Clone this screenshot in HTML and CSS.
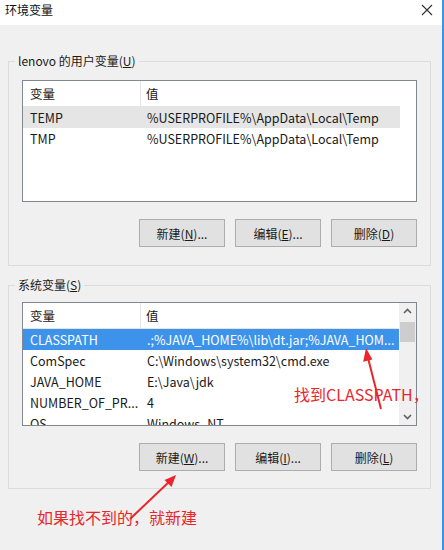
FILE: index.html
```html
<!DOCTYPE html>
<html lang="zh-CN">
<head>
<meta charset="utf-8">
<title>环境变量</title>
<link rel="stylesheet" href="styles.css">
</head>
<body>
<div class="window">
  <div class="titlebar">
    <span class="title">环境变量</span>
    <svg class="close" width="12" height="12" viewBox="0 0 12 12"><path d="M1 1L11 11M11 1L1 11" stroke="#333" stroke-width="1.1" fill="none"/></svg>
  </div>
  <div class="content">
    <fieldset class="group group-user">
      <legend class="legend">lenovo 的用户变量(<u>U</u>)</legend>
      <div class="group-inner">
        <div class="list">
          <div class="list-main">
            <div class="list-head">
              <div class="cell c1">变量</div>
              <div class="cell c2">值</div>
            </div>
            <div class="row hover"><div class="cell c1">TEMP</div><div class="cell c2">%USERPROFILE%\AppData\Local\Temp</div></div>
            <div class="row"><div class="cell c1">TMP</div><div class="cell c2">%USERPROFILE%\AppData\Local\Temp</div></div>
          </div>
          <div class="list-side"></div>
        </div>
        <div class="buttons">
          <div class="btn">新建(<u>N</u>)...</div>
          <div class="btn">编辑(<u>E</u>)...</div>
          <div class="btn">删除(<u>D</u>)</div>
        </div>
      </div>
    </fieldset>
    <fieldset class="group group-sys">
      <legend class="legend">系统变量(<u>S</u>)</legend>
      <div class="group-inner">
        <div class="list tall">
          <div class="list-main">
            <div class="list-head">
              <div class="cell c1">变量</div>
              <div class="cell c2">值</div>
            </div>
            <div class="row selected"><div class="cell c1">CLASSPATH</div><div class="cell c2">.;%JAVA_HOME%\lib\dt.jar;%JAVA_HOM...</div></div>
            <div class="row"><div class="cell c1">ComSpec</div><div class="cell c2">C:\Windows\system32\cmd.exe</div></div>
            <div class="row"><div class="cell c1">JAVA_HOME</div><div class="cell c2">E:\Java\jdk</div></div>
            <div class="row"><div class="cell c1">NUMBER_OF_PR...</div><div class="cell c2">4</div></div>
            <div class="row"><div class="cell c1">OS</div><div class="cell c2">Windows_NT</div></div>
          </div>
          <div class="scrollbar">
            <svg class="arrow-btn" width="17" height="17" viewBox="0 0 17 17"><path d="M5 10L8.5 6.5L12 10" stroke="#606060" stroke-width="1.6" fill="none"/></svg>
            <div class="track"><div class="thumb"></div></div>
            <svg class="arrow-btn" width="17" height="17" viewBox="0 0 17 17"><path d="M5 7L8.5 10.5L12 7" stroke="#606060" stroke-width="1.6" fill="none"/></svg>
          </div>
        </div>
        <div class="buttons">
          <div class="btn">新建(<u>W</u>)...</div>
          <div class="btn">编辑(<u>I</u>)...</div>
          <div class="btn">删除(<u>L</u>)</div>
        </div>
      </div>
    </fieldset>
  </div>

  <div class="note note-1">找到CLASSPATH，</div>
  <div class="note note-2">如果找不到的，就新建</div>
  <svg class="arrows" width="444" height="550" viewBox="0 0 444 550">
    <line x1="381" y1="409" x2="367" y2="354" stroke="#e8262b" stroke-width="2"/>
    <polygon points="366,348 372.4,359.5 363.2,361.7" fill="#e8262b"/>
    <line x1="130" y1="519" x2="171" y2="480" stroke="#e8262b" stroke-width="2"/>
    <polygon points="176,475 171.5,487 164.5,480" fill="#e8262b"/>
  </svg>
</div>
</body>
</html>
```
FILE: styles.css
```css
html, body {
  margin: 0;
  padding: 0;
}
body {
  font-family: "Noto Sans CJK SC", "Noto Sans", sans-serif;
  font-size: 12px;
  color: #1a1a1a;
  background: #f0f0f0;
}
.window {
  position: relative;
  width: 442px;
  height: 550px;
  border-right: 2px solid #3f93e6;
  background: #f0f0f0;
  overflow: hidden;
}
.titlebar {
  height: 25px;
  background: #ffffff;
  display: flex;
  justify-content: space-between;
  align-items: flex-start;
  padding: 2px 0 0 5px;
  box-sizing: border-box;
}
.title {
  line-height: 16px;
  color: #111;
}
.close {
  margin: 2px 9px 0 0;
}
.content {
  padding: 28px 0 0 8px;
}
.group {
  margin: 0;
  width: 423px;
  box-sizing: border-box;
  border: 1px solid #dcdcdc;
  padding: 0;
  min-width: 0;
}
.group-sys {
  margin-top: 11px;
}
.legend {
  margin-left: 6px;
  padding: 0 3px;
  line-height: 16px;
  color: #1a1a1a;
}
.group-inner {
  padding: 11px 13px 18px 13px;
}
.group-sys .group-inner {
  padding-top: 9px;
  padding-bottom: 17px;
}
.list {
  height: 122px;
  box-sizing: border-box;
  border: 1px solid #828790;
  background: #ffffff;
  display: flex;
  overflow: hidden;
  font-size: 12.5px;
}
.list.tall {
  height: 124px;
}
.list-main {
  width: 377px;
  overflow: hidden;
}
.list-side {
  flex: 1;
}
.list-head {
  display: grid;
  grid-template-columns: 118px 1fr;
  height: 25px;
  border-bottom: 1px solid #e5e5e5;
  align-items: stretch;
}
.list-head .c1 {
  border-right: 1px solid #e5e5e5;
}
.cell {
  display: flex;
  align-items: center;
  white-space: nowrap;
  overflow: hidden;
}
.c1 {
  padding-left: 7px;
}
.c2 {
  padding-left: 5px;
}
.row {
  display: grid;
  grid-template-columns: 119px 1fr;
  height: 21px;
}
.row.hover {
  background: #e5e5e5;
}
.row.selected {
  background: #3d93ea;
  color: #ffffff;
}
.scrollbar {
  width: 17px;
  display: flex;
  flex-direction: column;
  background: #f0f0f0;
  margin-left: auto;
}
.arrow-btn {
  display: block;
  flex: none;
}
.track {
  flex: 1;
  padding-top: 2px;
}
.thumb {
  height: 20px;
  margin: 0 1px;
  background: #cdcdcd;
}
.buttons {
  display: flex;
  justify-content: flex-end;
  gap: 10px;
  margin-top: 17px;
}
.btn {
  width: 86px;
  height: 28px;
  box-sizing: border-box;
  border: 1px solid #adadad;
  background: #e1e1e1;
  display: flex;
  align-items: center;
  justify-content: center;
  color: #1a1a1a;
}
.note {
  position: absolute;
  color: #e8262b;
  font-size: 16px;
  line-height: 20px;
  white-space: nowrap;
}
.note-1 {
  left: 294px;
  top: 384px;
}
.note-2 {
  left: 37px;
  top: 507px;
}
.arrows {
  position: absolute;
  left: 0;
  top: 0;
  pointer-events: none;
}
```
